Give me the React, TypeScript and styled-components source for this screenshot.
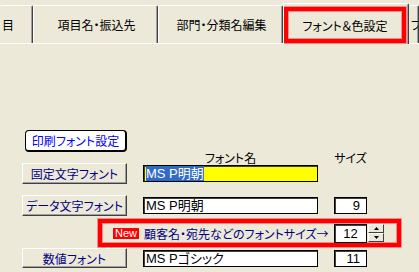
import React from 'react';
import styled, { createGlobalStyle } from 'styled-components';

const GlobalStyle = createGlobalStyle`
  html, body {
    margin: 0;
    padding: 0;
    background: #ece9d8;
    width: 419px;
    height: 272px;
    overflow: hidden;
    font-family: "Noto Sans CJK JP", "Liberation Sans", sans-serif;
    font-size: 12px;
    font-feature-settings: "palt";
  }
`;

const TabBar = styled.div`
  display: flex;
  align-items: flex-end;
  height: 44px;
  box-shadow: inset 0 -1px 0 #ffffff;
  overflow: hidden;
`;

interface TabProps {
  width: number;
  cut?: boolean;
  selected?: boolean;
}

const Tab = styled.div<TabProps>`
  box-sizing: border-box;
  flex: 0 0 ${(p) => p.width}px;
  height: ${(p) => (p.selected ? 41 : 38)}px;
  margin-bottom: ${(p) => (p.selected ? 0 : 1)}px;
  border-top: 1px solid #ffffff;
  border-left: ${(p) => (p.cut ? 'none' : '1px solid #ffffff')};
  border-right: 1px solid #404040;
  box-shadow: inset -1px 0 0 #a0a0a0;
  border-radius: 2px 2px 0 0;
  display: flex;
  align-items: center;
  justify-content: ${(p) => (p.cut ? 'flex-start' : 'center')};
  padding: ${(p) => (p.selected ? '3px 2px 1px 0' : '0 0 0 2px')};
  color: #000;
  white-space: nowrap;
  overflow: hidden;
`;

const TabHighlight = styled.div`
  box-sizing: border-box;
  flex: 1;
  align-self: stretch;
  display: flex;
  align-items: center;
  justify-content: center;
  border: 4px solid #ff0000;
  box-shadow: 0 0 0 1px #ff8c8c, inset 0 0 0 1px #ff8c8c;
`;

const Content = styled.div`
  padding-left: 22px;
`;

interface RowProps {
  top: number;
  height: number;
}

const Row = styled.div<RowProps>`
  display: flex;
  align-items: center;
  margin-top: ${(p) => p.top}px;
  height: ${(p) => p.height}px;
`;

const PrintButton = styled.div`
  box-sizing: border-box;
  margin-left: 3px;
  width: 102px;
  height: 22px;
  background: #ffffff;
  border: 1px solid #000;
  border-right-width: 2px;
  border-bottom-width: 2px;
  border-radius: 4px;
  color: #0000ff;
  display: flex;
  align-items: center;
  justify-content: center;
  white-space: nowrap;
`;

const HeaderLabel = styled.div<{ width: number; gap: number }>`
  width: ${(p) => p.width}px;
  margin-left: ${(p) => p.gap}px;
  text-align: center;
  line-height: 11px;
  color: #000;
  white-space: nowrap;
`;

const FontButton = styled.div<{ height: number }>`
  box-sizing: border-box;
  width: 105px;
  height: ${(p) => p.height}px;
  background: #ece9d8;
  border: 1px solid;
  border-color: #ffffff #404040 #404040 #ffffff;
  box-shadow: inset -1px -1px 0 #a0a0a0;
  color: #000080;
  display: flex;
  align-items: center;
  justify-content: center;
  white-space: nowrap;
`;

interface FieldProps {
  width: number;
  gap: number;
  yellow?: boolean;
  right?: boolean;
}

const Field = styled.div<FieldProps>`
  box-sizing: border-box;
  width: ${(p) => p.width}px;
  height: 17px;
  margin-left: ${(p) => p.gap}px;
  background: ${(p) => (p.yellow ? '#ffff00' : '#ffffff')};
  border: 1px solid #000;
  box-shadow: inset 1px 1px 0 #404040;
  font-family: "Liberation Sans", "Noto Sans CJK JP", sans-serif;
  font-size: 13px;
  line-height: 15px;
  padding: 0 6px 0 2px;
  text-align: ${(p) => (p.right ? 'right' : 'left')};
  white-space: nowrap;
  overflow: hidden;
`;

const Selected = styled.span`
  background: #316ac5;
  color: #ffffff;
`;

const RedBox = styled.div`
  box-sizing: border-box;
  margin-left: 76px;
  width: 303px;
  height: 28px;
  border: 4px solid #ff0000;
  box-shadow: 0 0 0 1px #ff8c8c, inset 0 0 0 1px #ff8c8c;
  display: flex;
  align-items: center;
`;

const NoticeText = styled.div`
  width: 232px;
  box-sizing: border-box;
  padding-left: 11px;
  display: flex;
  align-items: center;
  gap: 5px;
  color: #000080;
  white-space: nowrap;
  overflow: hidden;
`;

const NewBadge = styled.span`
  background: #ff0000;
  color: #ffffff;
  font-family: "Liberation Sans", sans-serif;
  font-size: 11px;
  line-height: 11px;
  padding: 0 2px;
  width: 22px;
  text-align: center;
`;

const SpinInput = styled.div`
  box-sizing: border-box;
  width: 33px;
  height: 19px;
  background: #fff;
  border: 1px solid #000;
  box-shadow: inset 1px 1px 0 #404040;
  font-family: "Liberation Sans", sans-serif;
  font-size: 13px;
  line-height: 17px;
  text-align: center;
`;

const SpinButtons = styled.div`
  display: flex;
  flex-direction: column;
  margin-left: 1px;
  height: 18px;
`;

const SpinButton = styled.div`
  box-sizing: border-box;
  width: 16px;
  height: 9px;
  border: 1px solid;
  border-color: #ffffff #404040 #404040 #ffffff;
  background: #ece9d8;
  display: flex;
  align-items: center;
  justify-content: center;
`;

const Arrow = ({ up }: { up?: boolean }) => (
  <svg width="5" height="3" viewBox="0 0 5 3">
    <path d={up ? 'M2.5 0 L5 3 L0 3 Z' : 'M0 0 L5 0 L2.5 3 Z'} fill="#000" />
  </svg>
);

export default function App() {
  return (
    <>
      <GlobalStyle />
      <TabBar>
        <Tab width={33} cut>目</Tab>
        <Tab width={125}>項目名・振込先</Tab>
        <Tab width={125}>部門・分類名編集</Tab>
        <Tab width={126} selected>
          <TabHighlight>フォント＆色設定</TabHighlight>
        </Tab>
        <Tab width={10} cut>フ</Tab>
      </TabBar>
      <Content>
        <Row top={86} height={22}>
          <PrintButton>印刷フォント設定</PrintButton>
        </Row>
        <Row top={0} height={11}>
          <HeaderLabel width={175} gap={121}>フォント名</HeaderLabel>
          <HeaderLabel width={33} gap={16}>サイズ</HeaderLabel>
        </Row>
        <Row top={0} height={21}>
          <FontButton height={21}>固定文字フォント</FontButton>
          <Field width={175} gap={16} yellow>
            <Selected>MS P明朝</Selected>
          </Field>
        </Row>
        <Row top={11} height={21}>
          <FontButton height={21}>データ文字フォント</FontButton>
          <Field width={175} gap={16}>MS P明朝</Field>
          <Field width={33} gap={16} right>9</Field>
        </Row>
        <Row top={3} height={28}>
          <RedBox>
            <NoticeText>
              <NewBadge>New</NewBadge>
              顧客名・宛先などのフォントサイズ→
            </NoticeText>
            <SpinInput>12</SpinInput>
            <SpinButtons>
              <SpinButton><Arrow up /></SpinButton>
              <SpinButton><Arrow /></SpinButton>
            </SpinButtons>
          </RedBox>
        </Row>
        <Row top={1} height={20}>
          <FontButton height={20}>数値フォント</FontButton>
          <Field width={175} gap={16}>MS Pゴシック</Field>
          <Field width={33} gap={16} right>11</Field>
        </Row>
      </Content>
    </>
  );
}
